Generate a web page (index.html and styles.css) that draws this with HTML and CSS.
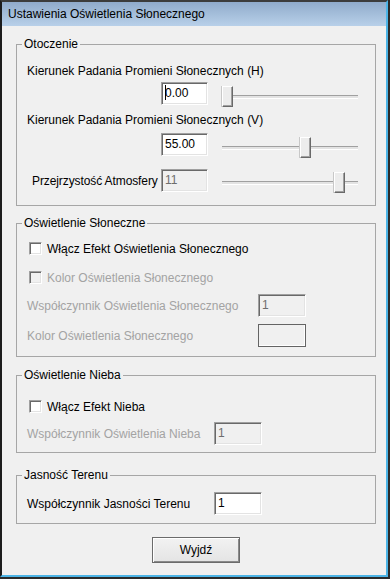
FILE: index.html
```html
<!DOCTYPE html>
<html lang="pl">
<head>
    <meta charset="UTF-8">
    <title>Ustawienia Oświetlenia Słonecznego</title>
    <link rel="stylesheet" href="styles.css">
</head>
<body>
    <div class="window">
        <!-- Title bar -->
        <div class="titlebar">Ustawienia Oświetlenia Słonecznego</div>

        <div class="client">
            <!-- Otoczenie -->
            <fieldset class="group g-env">
                <legend>Otoczenie</legend>
                <div class="caption cap-h">Kierunek Padania Promieni Słonecznych (H)</div>
                <div class="slider-row r-h">
                    <span></span>
                    <div class="edit"><span class="caret"></span>0.00</div>
                    <div class="trackbar"><div class="track"></div><div class="thumb" style="left: 0%"></div></div>
                </div>
                <div class="caption cap-v">Kierunek Padania Promieni Słonecznych (V)</div>
                <div class="slider-row r-v">
                    <span></span>
                    <div class="edit">55.00</div>
                    <div class="trackbar"><div class="track"></div><div class="thumb" style="left: calc((100% - 11px) * 0.624)"></div></div>
                </div>
                <div class="slider-row r-a">
                    <span class="atm-label">Przejrzystość Atmosfery</span>
                    <div class="edit disabled">11</div>
                    <div class="trackbar t-low"><div class="track"></div><div class="thumb" style="left: calc((100% - 11px) * 0.9)"></div></div>
                </div>
            </fieldset>

            <!-- Oświetlenie Słoneczne -->
            <fieldset class="group g-sun">
                <legend>Oświetlenie Słoneczne</legend>
                <div class="check-row c-1"><span class="check"></span><span>Włącz Efekt Oświetlenia Słonecznego</span></div>
                <div class="check-row c-2 off"><span class="check"></span><span>Kolor Oświetlenia Słonecznego</span></div>
                <div class="field-row f-1 off">
                    <span class="w-sun">Współczynnik Oświetlenia Słonecznego</span>
                    <div class="edit disabled">1</div>
                </div>
                <div class="field-row f-2 off">
                    <span class="w-sun">Kolor Oświetlenia Słonecznego</span>
                    <div class="color-box"></div>
                </div>
            </fieldset>

            <!-- Oświetlenie Nieba -->
            <fieldset class="group g-sky">
                <legend>Oświetlenie Nieba</legend>
                <div class="check-row c-3"><span class="check"></span><span>Włącz Efekt Nieba</span></div>
                <div class="field-row f-3 off">
                    <span class="w-sky">Współczynnik Oświetlenia Nieba</span>
                    <div class="edit disabled">1</div>
                </div>
            </fieldset>

            <!-- Jasność Terenu -->
            <fieldset class="group g-ground">
                <legend>Jasność Terenu</legend>
                <div class="field-row f-4">
                    <span class="w-sky">Współczynnik Jasności Terenu</span>
                    <div class="edit">1</div>
                </div>
            </fieldset>

            <button type="button" class="exit-button">Wyjdź</button>
        </div>
    </div>
</body>
</html>
```

FILE: styles.css
```css
body {
    margin: 0;
    background-color: #2b2b2b; /* desktop behind the dialog */
    font-family: "Liberation Sans", Arial, sans-serif;
    font-size: 12px;
    color: #000;
}

/* Dialog frame */
.window {
    width: 384px;
    border-top: 2px solid #3c3c3c;
    border-left: 2px solid #1c1c1c;
    border-right: 2px solid #4cb4e6;
    border-bottom: 2px solid #4cb4e6;
    background-color: #f0f0f0;
}

.titlebar {
    height: 24px;
    line-height: 24px;
    padding-left: 6px;
    background: linear-gradient(#90abcb, #b8d0e9);
}

.client {
    height: 549px;
    box-sizing: border-box;
    padding: 11px 10px 0 14px;
}

/* Group boxes */
.group {
    margin: 0;
    padding: 0 10px;
    border: 1px solid #a6a6a6;
    min-width: 0;
}

.group legend {
    padding: 0 2px;
    margin-left: -5px;
    line-height: 14px;
}

.g-env { padding-bottom: 12px; }
.g-sun { margin-top: 10px; padding-bottom: 9px; }
.g-sky { margin-top: 11px; padding-bottom: 7px; }
.g-ground { margin-top: 15px; padding-bottom: 8px; }

.caption {
    line-height: 14px;
}

.cap-h { margin-top: 13px; }
.cap-v { margin-top: 6px; }

/* Edit + trackbar rows */
.slider-row {
    display: grid;
    grid-template-columns: 120px 47px 136px;
    column-gap: 14px;
    align-items: start;
}

.r-h { margin-top: 4px; }
.r-v { margin-top: 6px; }
.r-a { margin-top: 11px; }

.atm-label {
    align-self: center;
    padding-left: 5px;
    white-space: nowrap;
    letter-spacing: -0.1px;
}

.edit {
    height: 23px;
    box-sizing: border-box;
    padding-left: 3px;
    line-height: 21px;
    background-color: #fff;
    border: 1px solid;
    border-color: #a0a0a0 #fff #fff #a0a0a0;
    box-shadow: inset 1px 1px #696969, inset -1px -1px #e3e3e3;
    white-space: nowrap;
}

.edit.disabled {
    background-color: #f0f0f0;
    color: #6d6d6d;
}

.caret {
    display: inline-block;
    width: 1px;
    height: 15px;
    margin-right: -1px;
    vertical-align: -3px;
    background-color: #000;
}

.trackbar {
    position: relative;
    height: 21px;
    margin-top: 4px;
}

.trackbar.t-low {
    margin-top: 3px;
}

.track {
    position: absolute;
    left: 0;
    right: 0;
    top: 9px;
    height: 2px;
    border-top: 1px solid #a0a0a0;
    border-bottom: 1px solid #fff;
    background-color: #e3e3e3;
}

.thumb {
    position: absolute;
    top: 0;
    width: 11px;
    height: 21px;
    box-sizing: border-box;
    background-color: #ececec;
    border: 1px solid;
    border-color: #fff #696969 #696969 #fff;
    box-shadow: inset -1px -1px #a0a0a0, -1px 0 #c8c8c8;
}

/* Checkboxes */
.check-row {
    display: flex;
    align-items: center;
    gap: 5px;
    height: 15px;
}

.c-1 { margin-top: 11px; }
.c-2 { margin-top: 14px; }
.c-3 { margin-top: 17px; }

.check {
    width: 13px;
    height: 13px;
    margin-left: 2px;
    box-sizing: border-box;
    background-color: #fff;
    border: 1px solid;
    border-color: #a0a0a0 #fff #fff #a0a0a0;
    box-shadow: inset 1px 1px #696969, inset -1px -1px #e3e3e3;
}

.off {
    color: #a3a3a3;
}

.off .check {
    background-color: #f0f0f0;
}

/* Label + edit rows */
.field-row {
    display: flex;
    align-items: center;
}

.field-row .edit,
.color-box {
    width: 48px;
}

.f-1 { margin-top: 9px; }
.f-2 { margin-top: 7px; }
.f-3 { margin-top: 8px; }
.f-4 { margin-top: 10px; }

.w-sun { width: 231px; }
.w-sky { width: 187px; }

.color-box {
    height: 23px;
    box-sizing: border-box;
    border: 1px solid #646464;
    box-shadow: inset -1px -1px #fff;
    background-color: #f0f0f0;
}

/* Exit button */
.exit-button {
    display: block;
    width: 88px;
    height: 26px;
    margin: 13px auto 0;
    padding: 0;
    font-family: inherit;
    font-size: 12px;
    color: #000;
    background: linear-gradient(#f2f2f2, #e4e4e4);
    border: 1px solid #6b6b6b;
    box-shadow: inset 1px 1px #fff, inset -1px -1px #8a8a8a;
}
```
